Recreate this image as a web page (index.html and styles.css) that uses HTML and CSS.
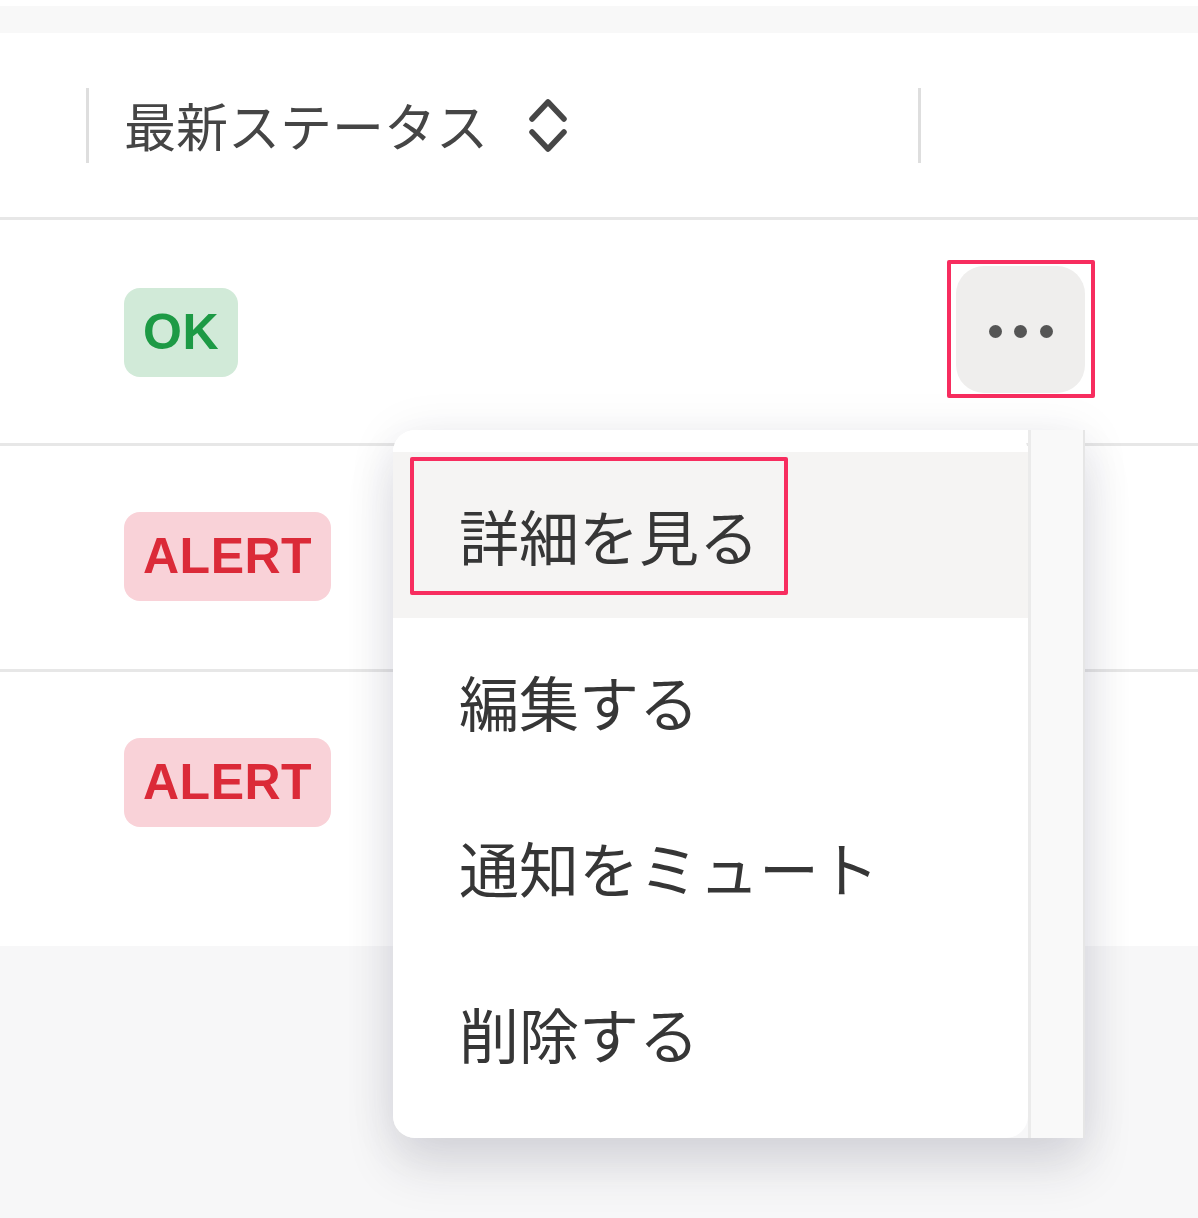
FILE: index.html
```html
<!DOCTYPE html>
<html lang="ja">
<head>
<meta charset="utf-8">
<title>Status table</title>
<link rel="stylesheet" href="styles.css">
</head>
<body>
<div class="page">
  <div class="topline"></div>
  <div class="band"></div>
  <div class="table">
    <div class="row head">
      <div class="cell c0"></div>
      <div class="cell c1 divided">
        <span class="th">最新ステータス</span>
        <svg class="sort" width="40" height="58" viewBox="0 0 40 58" aria-hidden="true">
          <polyline points="4,23 20,6 36,23" fill="none" stroke="#474747" stroke-width="5.5" stroke-linecap="round" stroke-linejoin="round"/>
          <polyline points="4,36 20,53 36,36" fill="none" stroke="#474747" stroke-width="5.5" stroke-linecap="round" stroke-linejoin="round"/>
        </svg>
      </div>
      <div class="cell c2 divided"></div>
    </div>
    <div class="row">
      <div class="cell c0"></div>
      <div class="cell c1"><span class="badge ok">OK</span></div>
      <div class="cell c2">
        <button class="more" type="button" aria-label="メニュー">
          <span class="dot"></span><span class="dot"></span><span class="dot"></span>
          <span class="mark mark-btn"></span>
        </button>
      </div>
    </div>
    <div class="row">
      <div class="cell c0"></div>
      <div class="cell c1"><span class="badge alert">ALERT</span></div>
      <div class="cell c2"></div>
    </div>
    <div class="row last">
      <div class="cell c0"></div>
      <div class="cell c1"><span class="badge alert">ALERT</span></div>
      <div class="cell c2"></div>
    </div>
  </div>

  <div class="menu">
    <ul class="menu-list">
      <li class="item active">詳細を見る<span class="mark mark-item"></span></li>
      <li class="item">編集する</li>
      <li class="item">通知をミュート</li>
      <li class="item">削除する</li>
    </ul>
    <div class="track"></div>
  </div>
</div>
</body>
</html>
```

FILE: styles.css
```css
* { box-sizing: border-box; }

html, body {
  margin: 0;
  padding: 0;
}

body {
  background: #f7f7f8;
  font-family: "Noto Sans CJK JP", "Noto Sans", sans-serif;
  color: #333;
  width: 1198px;
  height: 1218px;
  overflow: hidden;
}

.page {
  position: relative;
  width: 1198px;
  height: 1218px;
}

.topline {
  height: 6px;
  background: #ffffff;
}

.band {
  height: 27px;
  background: #f8f8f8;
}

.table {
  background: #ffffff;
  padding-bottom: 51px;
}

.row {
  display: grid;
  grid-template-columns: 86px 832px 1fr;
  height: 226px;
  border-bottom: 3px solid #e7e7e7;
}

.row.head {
  height: 187px;
}

.row.last {
  border-bottom: none;
  height: 223px;
}

.cell {
  display: flex;
  align-items: center;
  padding-left: 38px;
  position: relative;
}

.cell.c0 { padding-left: 0; }

.divided::before {
  content: "";
  position: absolute;
  left: 0;
  top: 55px;
  width: 3px;
  height: 75px;
  background: #dedede;
}

.th {
  font-size: 52px;
  line-height: 1;
  color: #454545;
  font-weight: 400;
  white-space: nowrap;
}

.sort {
  margin-left: 40px;
  display: block;
}

.badge {
  display: inline-flex;
  align-items: center;
  justify-content: center;
  height: 89px;
  padding: 0 19px;
  border-radius: 16px;
  font-family: "Liberation Sans", "Noto Sans", sans-serif;
  font-weight: 700;
  font-size: 50px;
  letter-spacing: 0.5px;
  line-height: 1;
}

.badge.ok {
  background: #d1ead8;
  color: #1d9a45;
  margin-top: 1px;
}

.badge.alert {
  background: #f9d2d8;
  color: #db2a38;
  margin-top: -3px;
}

.more {
  position: relative;
  width: 129px;
  height: 127px;
  border: none;
  border-radius: 28px;
  background: #efeeed;
  display: flex;
  align-items: center;
  justify-content: center;
  gap: 12.5px;
  padding: 4px 0 0 0;
  margin-top: -5px;
}

.dot {
  width: 13px;
  height: 13px;
  border-radius: 50%;
  background: #555555;
}

.mark {
  position: absolute;
  border: 4px solid #f72d5f;
  border-radius: 2px;
  pointer-events: none;
}

.mark-btn {
  left: -9px;
  top: -6px;
  width: 148px;
  height: 138px;
}

.menu {
  position: absolute;
  left: 393px;
  top: 430px;
  width: 692px;
  height: 708px;
  display: flex;
  box-shadow: 0 30px 50px rgba(30, 30, 60, 0.12), 0 4px 50px rgba(30, 30, 60, 0.08);
  border-radius: 22px 0 0 22px;
}

.menu-list {
  list-style: none;
  margin: 0;
  padding: 22px 0;
  width: 635px;
  background: #ffffff;
  border-radius: 22px;
}

.item {
  position: relative;
  height: 166px;
  display: flex;
  align-items: center;
  padding-left: 66px;
  font-size: 60px;
  line-height: 1;
  color: #363636;
  white-space: nowrap;
}

.item.active {
  background: #f5f4f3;
}

.mark-item {
  left: 17px;
  top: 5px;
  width: 378px;
  height: 138px;
}

.track {
  flex: 1;
  background: #f9f9f9;
  border-left: 3px solid #ebebeb;
  border-right: 2px solid #e6e6e6;
}
```
